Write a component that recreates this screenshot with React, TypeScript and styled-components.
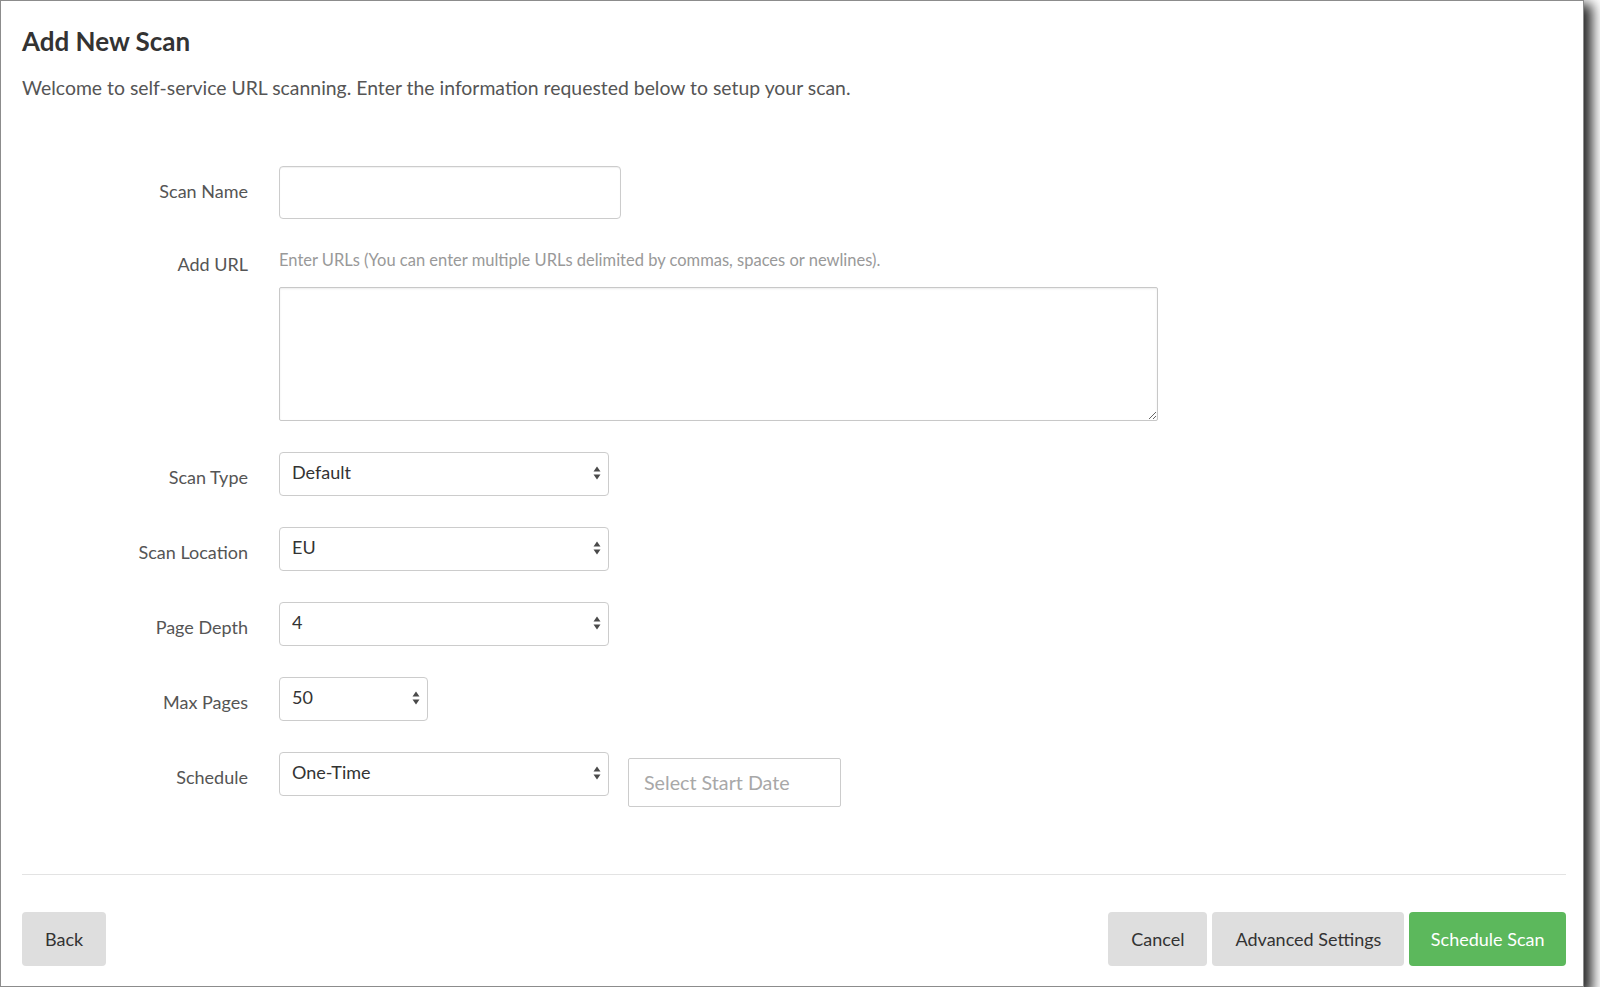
import styled, { createGlobalStyle } from "styled-components";

const GlobalStyle = createGlobalStyle`
  html, body {
    margin: 0;
    padding: 0;
    background: #ffffff;
  }
  body {
    font-family: Lato, "Noto Sans", sans-serif;
    color: #333333;
  }
  * {
    box-sizing: border-box;
  }
`;

const SelectArrows = () => (
  <ArrowIcon width="8" height="14" viewBox="0 0 8 14">
    <path d="M0.5 5.5 L4 0.5 L7.5 5.5 Z" fill="#4a4a4a" />
    <path d="M0.5 8.5 L4 13.5 L7.5 8.5 Z" fill="#4a4a4a" />
  </ArrowIcon>
);

type SelectProps = {
  width: number;
  value: string;
  options: string[];
};

const SelectBox = ({ width, value, options }: SelectProps) => (
  <SelectWrap $width={width}>
    <Select defaultValue={value}>
      {options.map((o) => (
        <option key={o} value={o}>
          {o}
        </option>
      ))}
    </Select>
    <SelectArrows />
  </SelectWrap>
);

export default function App() {
  return (
    <>
      <GlobalStyle />
      <Window>
        <Title>Add New Scan</Title>
        <Intro>
          Welcome to self-service URL scanning. Enter the information requested
          below to setup your scan.
        </Intro>

        <Form>
          <Row>
            <Label $pb={3}>Scan Name</Label>
            <TextInput type="text" />
          </Row>

          <Row $top>
            <Label $pt={3}>Add URL</Label>
            <Field>
              <Hint>
                Enter URLs (You can enter multiple URLs delimited by commas,
                spaces or newlines).
              </Hint>
              <UrlArea />
            </Field>
          </Row>

          <Row>
            <Label $pt={5}>Scan Type</Label>
            <SelectBox width={330} value="Default" options={["Default", "Quick", "Full"]} />
          </Row>

          <Row>
            <Label $pt={5}>Scan Location</Label>
            <SelectBox width={330} value="EU" options={["EU", "US", "APAC"]} />
          </Row>

          <Row>
            <Label $pt={5}>Page Depth</Label>
            <SelectBox width={330} value="4" options={["1", "2", "3", "4", "5"]} />
          </Row>

          <Row>
            <Label $pt={5}>Max Pages</Label>
            <SelectBox width={149} value="50" options={["10", "25", "50", "100"]} />
          </Row>

          <Row $top>
            <Label $pt={14}>Schedule</Label>
            <SelectBox
              width={330}
              value="One-Time"
              options={["One-Time", "Daily", "Weekly", "Monthly"]}
            />
            <DateInput type="text" placeholder="Select Start Date" />
          </Row>
        </Form>

        <Footer>
          <Divider />
          <ButtonBar>
            <Button>Back</Button>
            <ButtonGroup>
              <Button>Cancel</Button>
              <Button>Advanced Settings</Button>
              <Button $primary>Schedule Scan</Button>
            </ButtonGroup>
          </ButtonBar>
        </Footer>
      </Window>
    </>
  );
}

const Window = styled.div`
  width: 1584px;
  height: 987px;
  border: 1px solid #8c8c8c;
  background: #ffffff;
  box-shadow: 6px 6px 12px 2px rgba(0, 0, 0, 0.85);
  padding: 25px 17px 20px 21px;
  display: flex;
  flex-direction: column;
`;

const Title = styled.h1`
  margin: 0;
  font-size: 26px;
  line-height: 31px;
  font-weight: 700;
  color: #333333;
`;

const Intro = styled.p`
  margin: 19px 0 0 0;
  font-size: 19.4px;
  line-height: 24px;
  color: #555555;
`;

const Form = styled.div`
  margin-top: 66px;
  display: flex;
  flex-direction: column;
  gap: 31px;
`;

const Row = styled.div<{ $top?: boolean }>`
  display: flex;
  align-items: ${({ $top }) => ($top ? "flex-start" : "center")};
`;

const Label = styled.label<{ $pt?: number; $pb?: number }>`
  flex: 0 0 226px;
  margin-right: 31px;
  padding-top: ${({ $pt }) => $pt ?? 0}px;
  padding-bottom: ${({ $pb }) => $pb ?? 0}px;
  text-align: right;
  font-size: 18px;
  line-height: 22px;
  color: #555555;
`;

const Field = styled.div`
  display: flex;
  flex-direction: column;
`;

const Hint = styled.div`
  font-size: 16.5px;
  line-height: 20px;
  color: #999999;
  margin-bottom: 17px;
`;

const TextInput = styled.input`
  width: 342px;
  height: 53px;
  border: 1px solid #cccccc;
  border-radius: 4px;
  box-shadow: inset 0 1px 1px rgba(0, 0, 0, 0.06);
  padding: 0 12px;
  font-family: inherit;
  font-size: 18px;
  color: #333333;
  outline: none;
`;

const UrlArea = styled.textarea`
  width: 879px;
  height: 134px;
  border: 1px solid #c8c8c8;
  border-radius: 2px;
  box-shadow: inset 0 1px 2px rgba(0, 0, 0, 0.08);
  padding: 8px 12px;
  font-family: inherit;
  font-size: 18px;
  color: #333333;
  outline: none;
`;

const SelectWrap = styled.div<{ $width: number }>`
  position: relative;
  width: ${({ $width }) => $width}px;
  height: 44px;
  flex: 0 0 auto;
`;

const Select = styled.select`
  appearance: none;
  -webkit-appearance: none;
  width: 100%;
  height: 100%;
  border: 1px solid #cccccc;
  border-radius: 4px;
  background: #ffffff;
  padding: 0 28px 5px 12px;
  font-family: Lato, "Noto Sans", sans-serif;
  font-size: 18px;
  font-weight: 400;
  color: #333333;
  outline: none;
`;

const ArrowIcon = styled.svg`
  position: absolute;
  right: 8px;
  top: 14px;
  pointer-events: none;
`;

const DateInput = styled.input`
  width: 213px;
  height: 49px;
  margin: 6px 0 0 19px;
  border: 1px solid #cccccc;
  border-radius: 2px;
  padding: 0 15px;
  font-family: inherit;
  font-size: 19.7px;
  color: #333333;
  outline: none;

  &::placeholder {
    color: #a8a8a8;
  }
`;

const Footer = styled.div`
  margin-top: auto;
`;

const Divider = styled.div`
  border-top: 1px solid #e3e3e3;
`;

const ButtonBar = styled.div`
  margin-top: 37px;
  display: flex;
  justify-content: space-between;
  align-items: center;
`;

const ButtonGroup = styled.div`
  display: flex;
  gap: 5px;
`;

const Button = styled.button<{ $primary?: boolean }>`
  height: 54px;
  padding: 0 ${({ $primary }) => ($primary ? "21.5px" : "23px")};
  border: none;
  border-radius: 4px;
  background: ${({ $primary }) => ($primary ? "#5cb85c" : "#dedede")};
  color: ${({ $primary }) => ($primary ? "#ffffff" : "#333333")};
  font-family: Lato, "Noto Sans", sans-serif;
  font-size: 18px;
  cursor: pointer;
`;
